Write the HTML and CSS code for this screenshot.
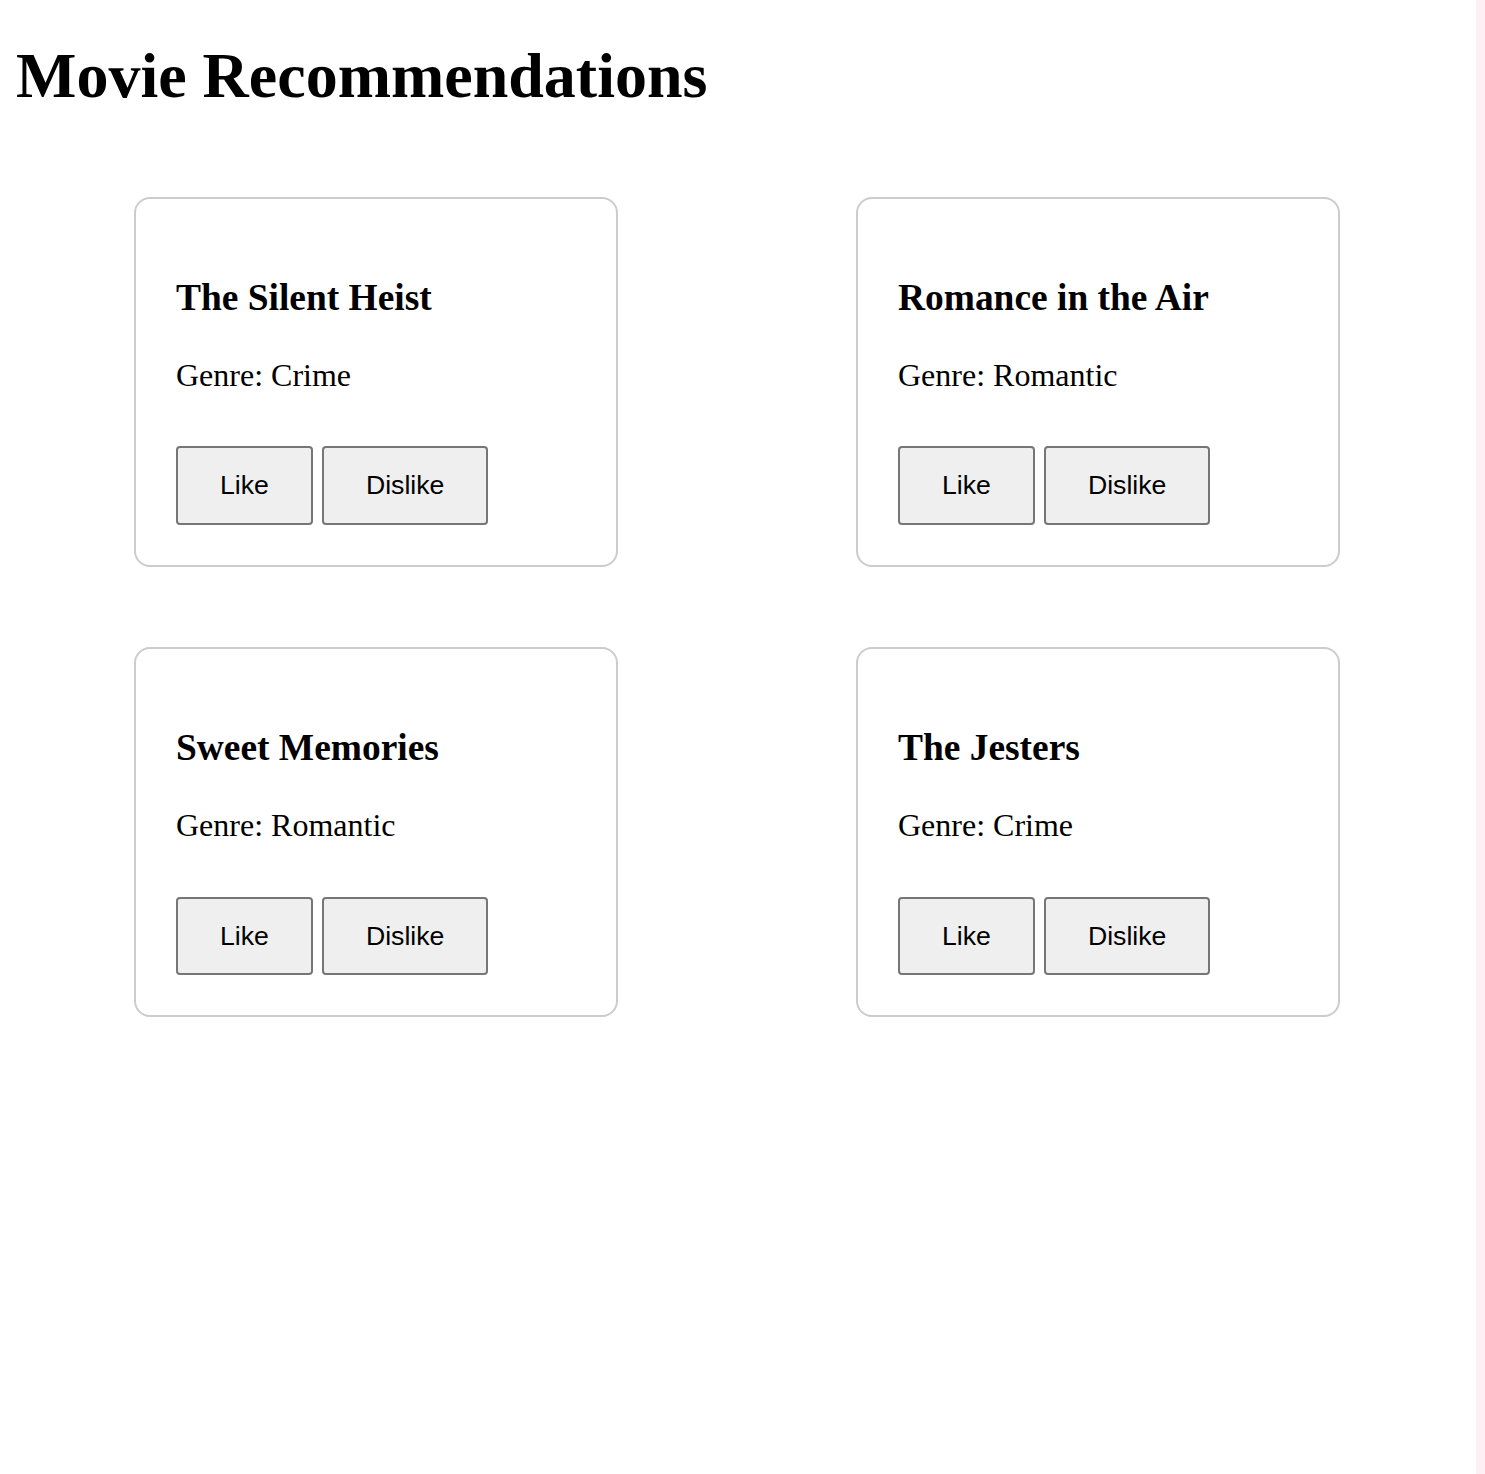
FILE: index.html
```html
<!DOCTYPE html>
<html lang="en">
<head>
<meta charset="utf-8">
<title>Movie Recommendations</title>
<link rel="stylesheet" href="styles.css">
</head>
<body>
<h1 class="page-title">Movie Recommendations</h1>
<div class="movie-grid">
  <div class="movie-card">
    <h3 class="movie-title">The Silent Heist</h3>
    <p class="movie-genre">Genre: Crime</p>
    <div class="movie-actions">
      <button class="btn">Like</button>
      <button class="btn">Dislike</button>
    </div>
  </div>
  <div class="movie-card">
    <h3 class="movie-title">Romance in the Air</h3>
    <p class="movie-genre">Genre: Romantic</p>
    <div class="movie-actions">
      <button class="btn">Like</button>
      <button class="btn">Dislike</button>
    </div>
  </div>
  <div class="movie-card">
    <h3 class="movie-title">Sweet Memories</h3>
    <p class="movie-genre">Genre: Romantic</p>
    <div class="movie-actions">
      <button class="btn">Like</button>
      <button class="btn">Dislike</button>
    </div>
  </div>
  <div class="movie-card">
    <h3 class="movie-title">The Jesters</h3>
    <p class="movie-genre">Genre: Crime</p>
    <div class="movie-actions">
      <button class="btn">Like</button>
      <button class="btn">Dislike</button>
    </div>
  </div>
</div>
<div class="side-strip"></div>
</body>
</html>
```
FILE: styles.css
```css
html {
  background: #ffffff;
}
body {
  margin: 16px;
  font-family: "Liberation Serif", "Times New Roman", serif;
  font-size: 32px;
  color: #000;
}
.page-title {
  font-size: 64px;
  font-weight: bold;
  margin: 23px 0 0 0;
  line-height: 1.15;
}
.movie-grid {
  display: grid;
  grid-template-columns: 484px 484px;
  column-gap: 238px;
  row-gap: 80px;
  margin-top: 84px;
  margin-left: 118px;
}
.movie-card {
  box-sizing: border-box;
  width: 484px;
  border: 2px solid #cccccc;
  border-radius: 16px;
  padding: 40px;
}
.movie-title {
  font-size: 37.44px;
  font-weight: bold;
  margin: 37.44px 0 37.44px 0;
  line-height: 1.15;
}
.movie-genre {
  margin: 0 0 53px 0;
  line-height: 1.15;
}
.movie-actions {
  display: flex;
  gap: 9px;
}
.btn {
  font-family: "Liberation Sans", Arial, sans-serif;
  font-size: 26.67px;
  line-height: 1.15;
  color: #000;
  background: #efefef;
  border: 2px solid #767676;
  border-radius: 4px;
  padding: 22px 42px;
  margin: 0;
}
.side-strip {
  position: fixed;
  top: 0;
  right: 0;
  width: 9px;
  height: 100%;
  background: #fcf0f5;
}
```
